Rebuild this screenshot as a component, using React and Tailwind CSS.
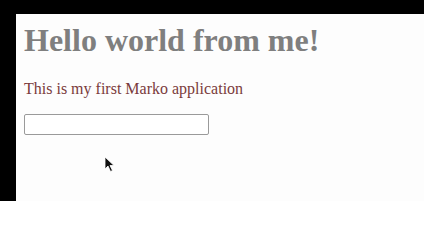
import React from "react";

export default function App() {
  return (
    <div className="w-[424px] h-[201px] bg-black overflow-hidden pl-[16px] pt-[14px]">
      <div className="relative w-full h-full bg-[#fdfdfd] pl-[8px] pt-[8px]" style={{ fontFamily: '"Liberation Serif", serif' }}>
        <h1 className="text-[32px] leading-[37px] font-bold text-[#7f7f7f] mb-[21px]">Hello world from me!</h1>
        <p className="text-[16px] leading-[18px] text-[#7a3b3b] mb-[16px]">This is my first Marko application</p>
        <input
          type="text"
          className="block w-[185px] h-[21px] border border-[#9a9a9a] rounded-[2px] bg-white outline-none"
        />
        <svg
          className="absolute left-[88px] top-[142px]"
          width="12"
          height="18"
          viewBox="0 0 12 18"
        >
          <path d="M1 1 L1 13 L4 10 L6.5 15.5 L8.5 14.5 L6 9.5 L10 9.5 Z" fill="#111" stroke="#fff" strokeWidth="0.8" />
        </svg>
      </div>
    </div>
  );
}
